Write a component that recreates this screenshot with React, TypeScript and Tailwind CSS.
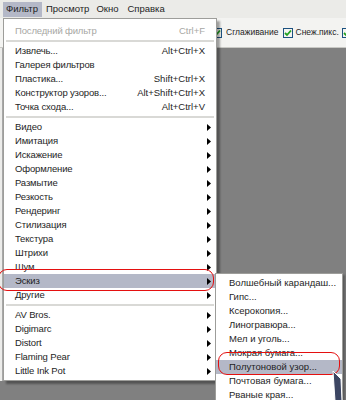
import React from 'react';

type Item =
    | { kind: 'item'; label: string; shortcut?: string; sub?: boolean; disabled?: boolean; active?: boolean }
    | { kind: 'sep' };

const mainItems: Item[] = [
    { kind: 'item', label: 'Последний фильтр', shortcut: 'Ctrl+F', disabled: true },
    { kind: 'sep' },
    { kind: 'item', label: 'Извлечь...', shortcut: 'Alt+Ctrl+X' },
    { kind: 'item', label: 'Галерея фильтров' },
    { kind: 'item', label: 'Пластика...', shortcut: 'Shift+Ctrl+X' },
    { kind: 'item', label: 'Конструктор узоров...', shortcut: 'Alt+Shift+Ctrl+X' },
    { kind: 'item', label: 'Точка схода...', shortcut: 'Alt+Ctrl+V' },
    { kind: 'sep' },
    { kind: 'item', label: 'Видео', sub: true },
    { kind: 'item', label: 'Имитация', sub: true },
    { kind: 'item', label: 'Искажение', sub: true },
    { kind: 'item', label: 'Оформление', sub: true },
    { kind: 'item', label: 'Размытие', sub: true },
    { kind: 'item', label: 'Резкость', sub: true },
    { kind: 'item', label: 'Рендеринг', sub: true },
    { kind: 'item', label: 'Стилизация', sub: true },
    { kind: 'item', label: 'Текстура', sub: true },
    { kind: 'item', label: 'Штрихи', sub: true },
    { kind: 'item', label: 'Шум', sub: true },
    { kind: 'item', label: 'Эскиз', sub: true, active: true },
    { kind: 'item', label: 'Другие', sub: true },
    { kind: 'sep' },
    { kind: 'item', label: 'AV Bros.', sub: true },
    { kind: 'item', label: 'Digimarc', sub: true },
    { kind: 'item', label: 'Distort', sub: true },
    { kind: 'item', label: 'Flaming Pear', sub: true },
    { kind: 'item', label: 'Little Ink Pot', sub: true },
];

const sketchItems = [
    'Волшебный карандаш...',
    'Гипс...',
    'Ксерокопия...',
    'Линогравюра...',
    'Мел и уголь...',
    'Мокрая бумага...',
    'Полутоновой узор...',
    'Почтовая бумага...',
    'Рваные края...',
];

const font = { fontFamily: '"Liberation Sans", Arial, sans-serif' };

function Arrow() {
    return (
        <svg className="absolute right-[5px] top-[4px]" width="4" height="7" viewBox="0 0 4 7">
            <path d="M0 0 L4 3.5 L0 7 Z" fill="#000" />
        </svg>
    );
}

function Check() {
    return (
        <span className="flex h-[10px] w-[10px] shrink-0 items-center justify-center border border-[#1c5180] bg-[#f4f4f0]">
            <svg width="8" height="8" viewBox="0 0 8 8">
                <path d="M1 4 L3 6 L7 1.5" stroke="#21a121" strokeWidth="1.8" fill="none" />
            </svg>
        </span>
    );
}

export default function App() {
    return (
        <div className="relative flex h-[400px] w-[346px] flex-col overflow-hidden bg-[#808080] text-[9.5px] text-[#1e1e1e]" style={font}>
            {/* menu bar */}
            <div className="flex h-[18px] items-center bg-[#ebebe8]">
                <span className="ml-[3px] flex h-[15px] w-[39px] items-center bg-[#b4b8c7] pl-[3px]">Фильтр</span>
                <span className="ml-[4px]">Просмотр</span>
                <span className="ml-[7px]">Окно</span>
                <span className="ml-[9px]">Справка</span>
            </div>

            {/* options bar */}
            <div className="flex h-[30px] items-center whitespace-nowrap border-b border-[#c8c8c4] bg-[#f3f3f1] pl-[212px] text-[8.5px]">
                <Check />
                <span className="ml-[4px]">Сглаживание</span>
                <span className="ml-[4px]"><Check /></span>
                <span className="ml-[3px]">Снеж.пикс.</span>
                <span className="ml-[3px]"><Check /></span>
            </div>

            {/* workspace */}
            <div className="flex flex-1">
                <div className="h-[333px] w-[3px] border-r border-[#a8a8a8] bg-[#ececea]" />
                <div className="flex-1 bg-[#808080]" />
            </div>

            {/* main dropdown */}
            <div className="absolute left-[3px] top-[18px] w-[214px] border border-[#9d9d9a] bg-white pb-[2px] pt-[5px] shadow-[3px_3px_2px_rgba(0,0,0,0.35)]">
                {mainItems.map((it, i) =>
                    it.kind === 'sep' ? (
                        <div key={i} className="flex h-[6px] items-center px-[2px]">
                            <div className="h-[2px] w-full bg-[#d9d9d6]" />
                        </div>
                    ) : (
                        <div
                            key={i}
                            className={`relative flex h-[14px] items-center pl-[11px] pr-[11px] ${
                                it.active ? 'bg-[#b4b8c7]' : ''
                            } ${it.disabled ? 'text-[#a7a7a4]' : ''}`}
                        >
                            <span className="flex-1 tracking-[-0.15px]">{it.label}</span>
                            {it.shortcut && <span>{it.shortcut}</span>}
                            {it.sub && <Arrow />}
                        </div>
                    )
                )}
            </div>

            {/* sketch submenu */}
            <div className="absolute left-[215px] top-[273px] w-[128px] border border-[#9d9d9a] bg-white pt-[2px] shadow-[2px_2px_2px_rgba(0,0,0,0.3)]">
                {sketchItems.map((s) => (
                    <div
                        key={s}
                        className={`flex h-[14px] items-center whitespace-nowrap pl-[13px] ${
                            s === 'Полутоновой узор...' ? 'bg-[#b4b8c7]' : ''
                        }`}
                    >
                        {s}
                    </div>
                ))}
            </div>

            {/* red annotations */}
            <div className="absolute left-[-2px] top-[269px] h-[22px] w-[216px] rounded-[9px] border-[1.5px] border-[#e41010]" />
            <div className="absolute left-[218px] top-[352px] h-[23px] w-[122px] rounded-[9px] border-[1.5px] border-[#e41010]" />

            {/* mouse pointer */}
            <svg className="absolute left-[332px] top-[371px]" width="14" height="30" viewBox="0 0 14 30">
                <path d="M1 0 L9 8 L10 30 L3 30 Z" fill="#3c4663" stroke="#fff" strokeWidth="1" />
            </svg>
        </div>
    );
}
